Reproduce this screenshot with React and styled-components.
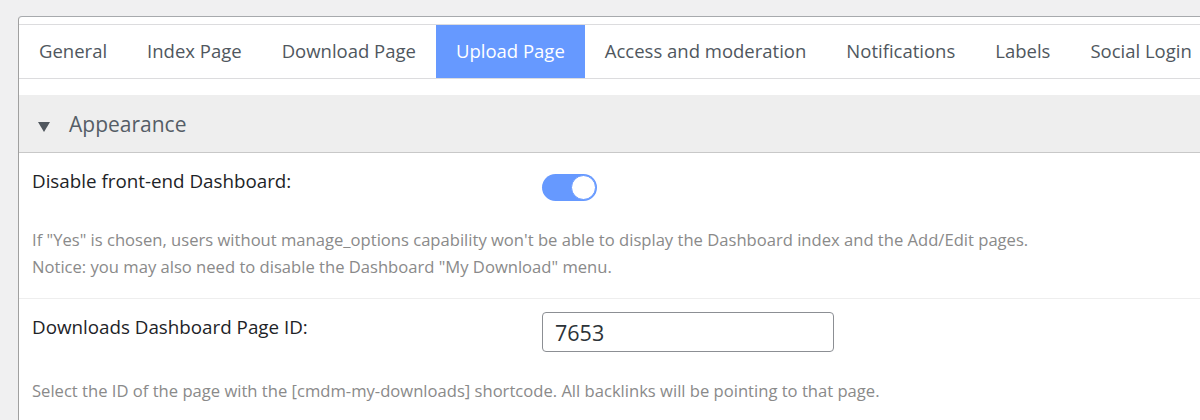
import React from "react";
import styled, { createGlobalStyle } from "styled-components";

const Global = createGlobalStyle`
  html, body { margin: 0; padding: 0; background: #f0f0f1; overflow: hidden; }
  body { font-family: "Open Sans", "Noto Sans", sans-serif; }
  * { box-sizing: border-box; }
`;

const Page = styled.div`
  padding: 16px 0 0 18px;
  width: 1200px;
  height: 420px;
  overflow: hidden;
`;

const Card = styled.div`
  width: 1240px;
  background: #fff;
  border-top: 1px solid #a7aaad;
  border-left: 1px solid #a0a0a0;
  border-top-left-radius: 4px;
  padding-top: 7px;
  min-height: 420px;
`;

const TabBar = styled.nav`
  display: flex;
  flex-wrap: nowrap;
  border-top: 1px solid #dcdcde;
  border-bottom: 1px solid #dcdcde;
`;

const Tab = styled.div`
  height: 53px;
  display: flex;
  align-items: center;
  padding: 0 20px 3px;
  white-space: nowrap;
  font-size: 18.5px;
  color: ${(p) => (p.$active ? "#ffffff" : "#50575e")};
  background: ${(p) => (p.$active ? "#6699ff" : "transparent")};
`;

const Section = styled.section`
  margin-top: 16px;
`;

const SectionHeader = styled.div`
  height: 58px;
  background: #eeeeee;
  border-bottom: 1px solid #c8c8c8;
  display: flex;
  align-items: center;
  gap: 19px;
  padding: 0 0 0 19px;
  font-size: 21px;
  color: #555d66;
`;

const Caret = styled.span`
  width: 0;
  height: 0;
  border-left: 6px solid transparent;
  border-right: 6px solid transparent;
  border-top: 10px solid #50575e;
  margin-top: 6px;
`;

const Row = styled.div`
  padding: 12px 13px 18px;
  border-bottom: 1px solid #eeeeee;
`;

const Field = styled.div`
  display: grid;
  grid-template-columns: 510px auto;
  align-items: start;
`;

const Label = styled.div`
  margin-top: 3px;
  font-size: 18.8px;
  line-height: 26px;
  color: #1d2327;
`;

const Control = styled.div`
  margin-top: ${(p) => p.$offset}px;
`;

const Switch = styled.div`
  width: 55px;
  height: 27px;
  border-radius: 14px;
  background: #6699ff;
  display: flex;
  align-items: center;
  justify-content: ${(p) => (p.$on ? "flex-end" : "flex-start")};
  padding: 0 1px;
`;

const Knob = styled.span`
  width: 25px;
  height: 25px;
  border-radius: 50%;
  background: #fff;
  border: 1.5px solid #6699ff;
`;

const Input = styled.input`
  width: 292px;
  height: 40px;
  border: 1px solid #8c8f94;
  border-radius: 4px;
  padding: 0 12px;
  font-family: "Open Sans", sans-serif;
  font-size: 21.5px;
  color: #2c3338;
  background: #fff;
  outline: none;
`;

const Description = styled.p`
  margin: 25px 0 0;
  font-size: 16.6px;
  line-height: 27px;
  color: #8a8a8a;
`;

const tabs = [
  "General",
  "Index Page",
  "Download Page",
  "Upload Page",
  "Access and moderation",
  "Notifications",
  "Labels",
  "Social Login",
];

export default function App() {
  return (
    <>
      <Global />
      <Page>
        <Card>
          <TabBar>
            {tabs.map((t) => (
              <Tab key={t} $active={t === "Upload Page"}>
                {t}
              </Tab>
            ))}
          </TabBar>
          <Section>
            <SectionHeader>
              <Caret />
              <span>Appearance</span>
            </SectionHeader>
            <Row>
              <Field>
                <Label>Disable front-end Dashboard:</Label>
                <Control $offset={9}>
                  <Switch $on>
                    <Knob />
                  </Switch>
                </Control>
              </Field>
              <Description>
                If "Yes" is chosen, users without manage_options capability won't be able to display the Dashboard index and the Add/Edit pages.
                <br />
                Notice: you may also need to disable the Dashboard "My Download" menu.
              </Description>
            </Row>
            <Row>
              <Field>
                <Label>Downloads Dashboard Page ID:</Label>
                <Control $offset={1}>
                  <Input defaultValue="7653" />
                </Control>
              </Field>
              <Description>
                Select the ID of the page with the [cmdm-my-downloads] shortcode. All backlinks will be pointing to that page.
              </Description>
            </Row>
          </Section>
        </Card>
      </Page>
    </>
  );
}
